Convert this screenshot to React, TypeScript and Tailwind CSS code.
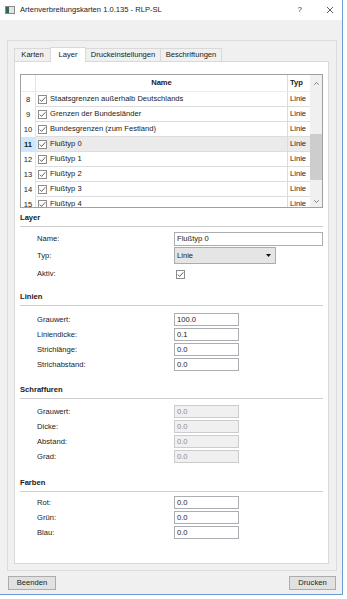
import React from 'react';

const rows = [
  { n: 8, name: 'Staatsgrenzen außerhalb Deutschlands' },
  { n: 9, name: 'Grenzen der Bundesländer' },
  { n: 10, name: 'Bundesgrenzen (zum Festland)' },
  { n: 11, name: 'Flußtyp 0', sel: true },
  { n: 12, name: 'Flußtyp 1' },
  { n: 13, name: 'Flußtyp 2' },
  { n: 14, name: 'Flußtyp 3' },
  { n: 15, name: 'Flußtyp 4' },
];

const tabs = [
  { label: 'Karten', w: 'w-[37px]' },
  { label: 'Layer', w: 'w-[36px] -ml-px', active: true },
  { label: 'Druckeinstellungen', w: 'w-[76px] -ml-px' },
  { label: 'Beschriftungen', w: 'w-[62px] -ml-px' },
];

const Check = () => (
  <svg width="9" height="9" viewBox="0 0 9 9" className="shrink-0">
    <rect x="0.5" y="0.5" width="8" height="8" fill="white" stroke="#8c8c8c" />
    <path d="M1.8 4.6 L3.6 6.4 L7.3 2.3" fill="none" stroke="#4d4d4d" strokeWidth="0.9" />
  </svg>
);

const Heading = ({ title, className }: { title: string; className: string }) => (
  <div className={`pb-[3px] border-b border-[#cfcfcf] font-bold leading-[10px] ${className}`}>{title}</div>
);

const Field = ({ label, value, disabled }: { label: string; value: string; disabled?: boolean }) => (
  <div className="flex items-center">
    <span className="w-[137px] leading-[10px]">{label}</span>
    <div
      className={`w-[65px] h-[13px] border pl-[2px] leading-[11px] ${
        disabled ? 'bg-[#f0f0f0] border-[#cccccc] text-[#8c8c8c]' : 'bg-white border-[#abadb3] text-[#1a1a1a]'
      }`}
    >
      {value}
    </div>
  </div>
);

export default function App() {
  return (
    <div className="w-[347px] h-[599px] bg-white font-['Liberation_Sans',Arial,sans-serif] text-[7.6px] text-[#1a1a1a]">
      <div className="w-[343px] h-[595px] border-r border-b border-[#6b9bd1] flex flex-col bg-[#f0f0f0]">
        {/* title bar */}
        <div className="h-[20px] shrink-0 bg-white flex items-center pl-[5px] pr-[9px]">
          <svg width="10" height="8" viewBox="0 0 10 8">
            <rect x="0.5" y="0.5" width="9" height="7" fill="#e4e4e4" stroke="#8a8a8a" />
            <rect x="1" y="1" width="3" height="6" fill="#2f6a52" />
          </svg>
          <span className="ml-[5px] leading-[10px]">Artenverbreitungskarten 1.0.135 - RLP-SL</span>
          <span className="ml-auto text-[8px] leading-[10px] text-[#333]">?</span>
          <svg width="6" height="6" viewBox="0 0 6 6" className="ml-[25px]">
            <path d="M0 0 L6 6 M6 0 L0 6" stroke="#333" strokeWidth="0.8" />
          </svg>
        </div>

        <div className="flex-1 flex flex-col pt-[20px] pl-[7px] pr-[5px] pb-[4px]">
          {/* frame */}
          <div className="h-[531px] shrink-0 border border-[#dcdcdc] flex flex-col pt-[6px] pl-[6px] pr-[7px] pb-[6px]">
            <div className="h-[14px] shrink-0 flex items-end">
              {tabs.map((t) =>
                t.active ? (
                  <div
                    key={t.label}
                    className={`${t.w} h-[15px] -mb-px relative z-10 bg-white border-t border-l border-r border-[#d9d9d9] flex items-center justify-center leading-[10px]`}
                  >
                    {t.label}
                  </div>
                ) : (
                  <div
                    key={t.label}
                    className={`${t.w} h-[13px] bg-[#f0f0f0] border-t border-l border-r border-[#d9d9d9] flex items-center justify-center leading-[10px]`}
                  >
                    {t.label}
                  </div>
                )
              )}
            </div>

            {/* tab pane */}
            <div className="flex-1 border border-[#d9d9d9] bg-white flex flex-col pt-[12px] px-[5px]">
              {/* table */}
              <div className="h-[134px] shrink-0 border border-[#a0a0a0] flex overflow-hidden">
                <div className="flex-1 flex flex-col overflow-hidden">
                  <div className="flex h-[17px] shrink-0 border-b border-[#ececec]">
                    <div className="w-[15px] border-r border-[#e3e3e3]" />
                    <div className="w-[252px] border-r border-[#dcdcdc] font-bold flex items-center justify-center">
                      Name
                    </div>
                    <div className="flex-1 font-bold flex items-center pl-[2px]">Typ</div>
                  </div>
                  {rows.map((r) => (
                    <div key={r.n} className="flex h-[15px] shrink-0">
                      <div
                        className={`w-[15px] border-r border-[#e3e3e3] flex items-center justify-center ${
                          r.sel ? 'bg-[#cce8ff] font-bold' : 'bg-white'
                        }`}
                      >
                        {r.n}
                      </div>
                      <div
                        className={`w-[252px] border-r border-b border-[#dcdcdc] flex items-center ${
                          r.sel ? 'bg-[#ebebeb]' : ''
                        }`}
                      >
                        <span className="ml-[2px] flex">
                          <Check />
                        </span>
                        <span className="ml-[3px] leading-[10px]">{r.name}</span>
                      </div>
                      <div
                        className={`flex-1 border-b border-[#dcdcdc] flex items-center pl-[2px] text-[#1a1a1a] ${
                          r.sel ? 'bg-[#ebebeb]' : ''
                        }`}
                      >
                        <span className="leading-[10px]">Linie</span>
                      </div>
                    </div>
                  ))}
                </div>
                {/* scrollbar */}
                <div className="w-[12px] shrink-0 bg-[#f0f0f0] flex flex-col">
                  <div className="h-[17px] flex items-center justify-center">
                    <svg width="5" height="3" viewBox="0 0 5 3">
                      <path d="M0.3 2.7 L2.5 0.5 L4.7 2.7" fill="none" stroke="#606060" strokeWidth="0.8" />
                    </svg>
                  </div>
                  <div className="mt-[42px] h-[46px] bg-[#cdcdcd]" />
                  <div className="flex-1" />
                  <div className="h-[12px] flex items-center justify-center">
                    <svg width="5" height="3" viewBox="0 0 5 3">
                      <path d="M0.3 0.3 L2.5 2.5 L4.7 0.3" fill="none" stroke="#606060" strokeWidth="0.8" />
                    </svg>
                  </div>
                </div>
              </div>

              {/* Layer */}
              <Heading title="Layer" className="mt-[5px]" />
              <div className="pl-[17px] flex flex-col">
                <div className="mt-[5px] flex items-center">
                  <span className="w-[137px] leading-[10px]">Name:</span>
                  <div className="w-[149px] h-[14px] border border-[#abadb3] bg-white pl-[2px] leading-[12px]">
                    Flußtyp 0
                  </div>
                </div>
                <div className="mt-[1px] flex items-center">
                  <span className="w-[137px] leading-[10px]">Typ:</span>
                  <div className="w-[102px] h-[17px] border border-[#acacac] bg-[#e5e5e5] flex items-center pl-[2px] pr-[4px]">
                    <span className="leading-[10px]">Linie</span>
                    <svg width="5" height="3" viewBox="0 0 5 3" className="ml-auto">
                      <path d="M0 0 L5 0 L2.5 3 Z" fill="#111" />
                    </svg>
                  </div>
                </div>
                <div className="mt-[3px] h-[14px] flex items-center">
                  <span className="w-[137px] leading-[10px]">Aktiv:</span>
                  <span className="ml-[2px] flex">
                    <Check />
                  </span>
                </div>
              </div>

              {/* Linien */}
              <Heading title="Linien" className="mt-[11px]" />
              <div className="pl-[17px] mt-[7px] flex flex-col gap-[2px]">
                <Field label="Grauwert:" value="100.0" />
                <Field label="Liniendicke:" value="0.1" />
                <Field label="Strichlänge:" value="0.0" />
                <Field label="Strichabstand:" value="0.0" />
              </div>

              {/* Schraffuren */}
              <Heading title="Schraffuren" className="mt-[14px]" />
              <div className="pl-[17px] mt-[6px] flex flex-col gap-[2px]">
                <Field label="Grauwert:" value="0.0" disabled />
                <Field label="Dicke:" value="0.0" disabled />
                <Field label="Abstand:" value="0.0" disabled />
                <Field label="Grad:" value="0.0" disabled />
              </div>

              {/* Farben */}
              <Heading title="Farben" className="mt-[15px]" />
              <div className="pl-[17px] mt-[4px] flex flex-col gap-[2px]">
                <Field label="Rot:" value="0.0" />
                <Field label="Grün:" value="0.0" />
                <Field label="Blau:" value="0.0" />
              </div>
            </div>
          </div>

          {/* buttons */}
          <div className="mt-[5px] flex justify-between px-[1px]">
            <button className="w-[48px] h-[14px] bg-[#e1e1e1] border border-[#adadad] leading-[10px]">Beenden</button>
            <button className="w-[47px] h-[14px] bg-[#e1e1e1] border border-[#adadad] leading-[10px]">Drucken</button>
          </div>
        </div>
      </div>
    </div>
  );
}
